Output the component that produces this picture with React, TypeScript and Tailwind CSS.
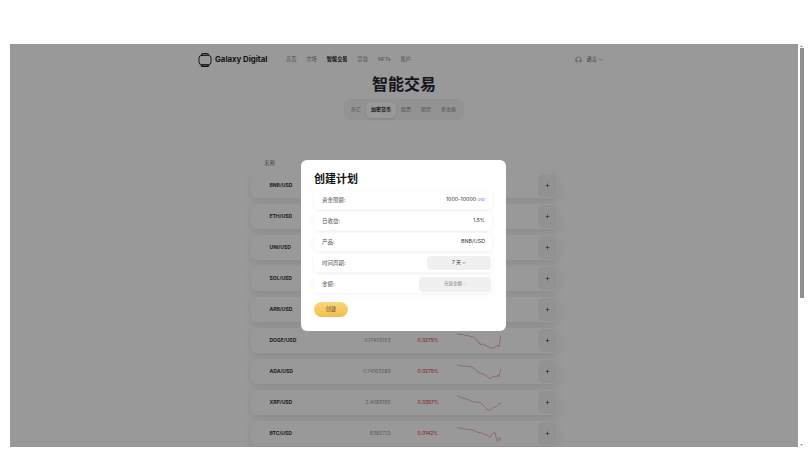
import { ChevronDown, Headphones, Plus } from "lucide-react";

const font = "font-['Inter','Noto_Sans_CJK_SC',sans-serif]";

const NAV = ["首页", "市场", "智能交易", "贷款", "NFTs", "账户"];

const TABS = ["外汇", "加密货币", "股票", "期货", "贵金属"];

const ROWS = [
  { name: "BNB/USD", price: "612.4521", pct: "0.0312%", line: "0,2 5,3 10,4 15,5 20,9 25,12 30,15 35,16 40,12 44,4" },
  { name: "ETH/USD", price: "1893.214", pct: "0.0275%", line: "0,2 5,3 10,4 15,5 20,9 25,12 30,15 35,16 40,12 44,4" },
  { name: "UNI/USD", price: "5.21844", pct: "0.0275%", line: "0,2 5,3 10,4 15,5 20,9 25,12 30,15 35,16 40,12 44,4" },
  { name: "SOL/USD", price: "128.4471", pct: "0.0275%", line: "0,2 5,3 10,4 15,5 20,9 25,12 30,15 35,16 40,12 44,4" },
  { name: "ARB/USD", price: "0.31244", pct: "0.0275%", line: "0,2 5,3 10,4 15,5 20,9 25,12 30,15 35,16 40,12 44,4" },
  { name: "DOGE/USD", price: "0.17405153", pct: "0.0275%", line: "0,1.5 3,2.5 5,2.2 8,3.5 10,3.2 13,4.5 17,5 20,9 22,10 23,12.5 26,12 28,13 30,14 32,15 35,16.5 37,15.5 38,15 40,14 41,13 42,15 43,9 44,3.5" },
  { name: "ADA/USD", price: "0.74163289", pct: "0.0275%", line: "0,1.5 4,3 8,3 13,3.5 16,5 18,6 21,9 23,10 26,11 28,12 31,14 33,16 35,14.5 37,13.5 39,13.8 41,12 42,14 43,9 44,5.5" },
  { name: "XRP/USD", price: "2.4089195", pct: "0.0357%", line: "0,1.5 3,3 6,4 9,5 12,6 15,7.5 18,8 21,8 24,9 26,11 28,13 30,15 32,16.5 34,15.5 36,14 38,13 40,12 42,9.5 43,9 44,9.5" },
  { name: "BTC/USD", price: "83827.13", pct: "0.0142%", line: "0,2.5 4,3.2 8,4 12,4.5 16,5 20,7 24,8 27,9 30,10 33,12.5 35,9 38,7.5 39,12 40.5,16.5 42,13 43,12.5 44,16" },
];

function Logo() {
  return (
    <svg viewBox="0 0 14 14" className="h-[14px] w-[14px]" fill="none" stroke="#111" strokeLinecap="round">
      <rect x="1" y="2.4" width="12" height="9.2" rx="2.4" strokeWidth="0.9" />
      <path d="M3.5 1.2C5.5 .5 8.5 .5 10.5 1.2" strokeWidth="1.2" />
      <path d="M3.5 12.8C5.5 13.5 8.5 13.5 10.5 12.8" strokeWidth="1.6" />
    </svg>
  );
}

function FormRow({ label, children }: { label: string; children: React.ReactNode }) {
  return (
    <div className="flex h-[18px] items-center justify-between rounded-[4px] bg-white pl-2 pr-[1px] shadow-[0_1px_5px_rgba(0,0,0,0.06)]">
      <span className="text-[5.5px] text-[#555]">{label}</span>
      {children}
    </div>
  );
}

export default function App() {
  return (
    <div className={`flex h-[466px] w-[810px] flex-col overflow-hidden bg-white ${font}`}>
      <div className="h-[44px] shrink-0" />
      <div className="flex h-[403px] shrink-0">
        <div className="w-[10px] shrink-0" />

        {/* page under the dimmed overlay */}
        <div className="relative w-[788px] shrink-0 overflow-hidden bg-white">
          <header className="mx-auto flex h-[30px] w-[412px] items-center justify-between pt-[1px]">
            <div className="flex items-center">
              <Logo />
              <span className="ml-[3px] w-[52px] text-[7.8px] font-bold whitespace-nowrap text-[#1d1d1d]">Galaxy Digital</span>
              <nav className="ml-[19px] flex gap-[10px]">
                {NAV.map((n) => (
                  <span
                    key={n}
                    className={n === "智能交易" ? "text-[5.2px] font-bold text-[#222]" : "text-[5.2px] text-[#888]"}
                  >
                    {n}
                  </span>
                ))}
              </nav>
            </div>
            <div className="mr-[7px] flex items-center text-[#555]">
              <Headphones size={7} strokeWidth={1.5} />
              <span className="ml-[5px] text-[5.2px]">语言</span>
              <ChevronDown size={5} strokeWidth={2} className="ml-[1px]" />
            </div>
          </header>

          <h1 className="text-center text-[16px] leading-[20px] font-bold text-[#1f2933]">智能交易</h1>

          <div className="mx-auto mt-[5px] flex h-[21px] w-[120px] items-center rounded-[5px] bg-[#f5f5f5] pl-[2px]">
            {TABS.map((t) => (
              <span
                key={t}
                className={
                  t === "加密货币"
                    ? "flex h-[16px] w-[30px] items-center justify-center rounded-[5px] bg-white text-[5px] font-semibold whitespace-nowrap text-[#222] shadow-[0_1px_3px_rgba(0,0,0,0.12)]"
                    : "flex h-[16px] items-center justify-center px-[5px] text-[5px] whitespace-nowrap text-[#888]"
                }
              >
                {t}
              </span>
            ))}
          </div>

          <div className="mx-auto mt-[39px] w-[307px]">
            <div className="pl-[14px] text-[5.2px] leading-[8px] text-[#777]">名称</div>
            <div className="mt-[6px] flex flex-col gap-[6px]">
              {ROWS.map((r) => (
                <div
                  key={r.name}
                  className="flex h-[25px] items-center rounded-[6px] bg-white pr-[1px] shadow-[0_4px_8px_rgba(0,0,0,0.09)]"
                >
                  <span className="ml-[19px] w-[60px] text-[5px] font-bold text-[#2b3340]">{r.name}</span>
                  <span className="w-[61px] text-right text-[5px] text-[#999]">{r.price}</span>
                  <span className="ml-[27px] w-[39px] text-[4.9px] font-medium text-[#d8433f]">{r.pct}</span>
                  <svg viewBox="0 0 44 18" className="h-[18px] w-[44px]" fill="none" stroke="#d96a64" strokeWidth="0.5">
                    <polyline points={r.line} />
                  </svg>
                  <button
                    type="button"
                    className="ml-auto flex h-[23px] w-[19px] items-center justify-center rounded-[5px] bg-[#f3f3f3] text-[#222]"
                  >
                    <Plus size={5} strokeWidth={2.5} />
                  </button>
                </div>
              ))}
            </div>
          </div>

          <div className="absolute inset-0 bg-black/40" />

          {/* create plan modal */}
          <div className="absolute top-[116px] left-[291px] flex h-[171px] w-[205px] flex-col rounded-[6px] bg-white px-[13px] pt-[11px]">
            <h2 className="text-[11px] leading-[16px] font-bold text-[#111]">创建计划</h2>
            <div className="mt-[4px] mr-[1px] flex flex-col gap-[3px]">
              <FormRow label="资金限额:">
                <span className="mr-[6px] text-[5.3px] text-[#333]">
                  1000-10000 <span className="text-[3.5px] text-[#5b5bb5]">USD</span>
                </span>
              </FormRow>
              <FormRow label="日收益:">
                <span className="mr-[6px] text-[5.3px] text-[#333]">1.5%</span>
              </FormRow>
              <FormRow label="产品:">
                <span className="mr-[6px] text-[5.3px] text-[#333]">BNB/USD</span>
              </FormRow>
              <FormRow label="时间周期:">
                <div className="flex h-[14px] w-[64px] items-center justify-center rounded-[4px] bg-[#f0f0f0] text-[5px] text-[#333]">
                  7 天
                  <ChevronDown size={4} strokeWidth={3} className="ml-[1px]" />
                </div>
              </FormRow>
              <FormRow label="金额:">
                <div className="flex h-[15px] w-[72px] items-center justify-center rounded-[4px] bg-[#f0f0f0] text-[4.5px] text-[#888]">
                  充值金额...
                </div>
              </FormRow>
            </div>
            <button
              type="button"
              className="mt-[9px] flex h-[15px] w-[34px] items-center justify-center rounded-full bg-linear-to-b from-[#f8d67c] to-[#f4bd48] text-[5.2px] text-[#5c4a1c]"
            >
              创建
            </button>
          </div>
        </div>

        <div className="w-[1px] shrink-0" />

        {/* scrollbar */}
        <div className="flex w-[5px] shrink-0 flex-col items-center justify-between">
          <div className="flex w-full flex-col items-center">
            <svg viewBox="0 0 4 3" className="mt-[1px] h-[2px] w-[3px]" fill="#9a9a9a">
              <polygon points="2,0 4,3 0,3" />
            </svg>
            <div className="mt-[1px] h-[250px] w-[4px] bg-[#8f8f8f]" />
          </div>
          <svg viewBox="0 0 4 3" className="mb-[1px] h-[2px] w-[3px]" fill="#9a9a9a">
            <polygon points="0,0 4,0 2,3" />
          </svg>
        </div>
      </div>
    </div>
  );
}
